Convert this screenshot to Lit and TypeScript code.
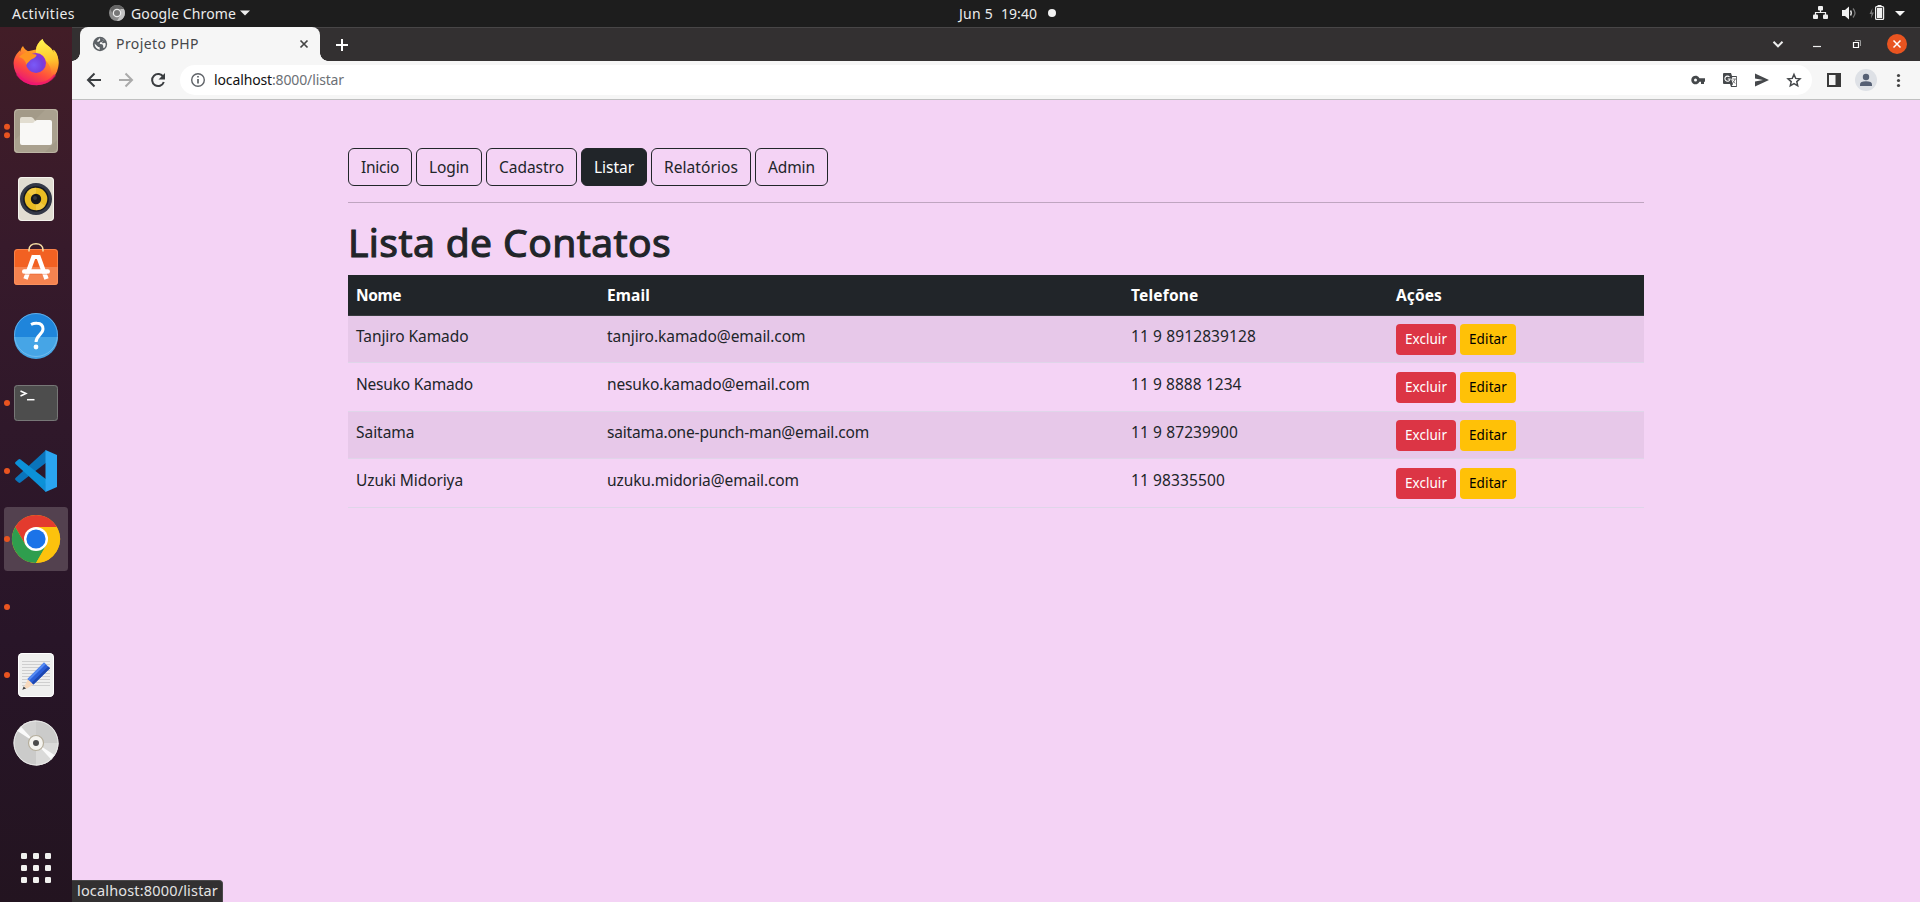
import { LitElement, html, css, svg } from "lit";
import { customElement, property } from "lit/decorators.js";

/** Inline text that is tracked so that its advance equals `w` pixels. */
@customElement("fit-text")
class FitText extends LitElement {
  @property() text = "";
  @property({ type: Number }) w = 0;
  static styles = css`
    :host { display: inline-block; white-space: pre; }
    .t { display: inline-block; }
  `;
  updated() {
    const t = this.renderRoot.querySelector(".t") as HTMLElement;
    t.style.letterSpacing = "0px";
    const natural = t.getBoundingClientRect().width;
    t.style.letterSpacing = (this.w - natural) / this.text.length + "px";
  }
  render() {
    return html`<span class="t">${this.text}</span>`;
  }
}

const fit = (text: string, w: number) => html`<fit-text .text=${text} .w=${w}></fit-text>`;

const dockIcons = [
  { dots: 0, art: svg`
    <defs>
      <linearGradient id="ffb" x1=".8" y1="0" x2=".3" y2="1"><stop offset="0" stop-color="#ffe53f"/><stop offset=".38" stop-color="#ff9a26"/><stop offset=".7" stop-color="#ff4a3f"/><stop offset="1" stop-color="#e5137b"/></linearGradient>
      <linearGradient id="fft" x1=".4" y1="0" x2=".5" y2="1"><stop offset="0" stop-color="#fff44f"/><stop offset=".55" stop-color="#ffc72f"/><stop offset="1" stop-color="#ff8a25" stop-opacity="0"/></linearGradient>
      <radialGradient id="ffg" cx=".4" cy=".6" r=".7"><stop offset="0" stop-color="#7a5af8"/><stop offset=".6" stop-color="#7440dc"/><stop offset="1" stop-color="#a02ad0"/></radialGradient>
    </defs>
    <path fill="url(#ffb)" d="M23 17c-2 2-2.600 4-2.500 6.300l-.4-2.100c-4.200 3.500-6.500 8.500-6.500 13.500A22.500 22 0 0 0 58.600 34c0-5-1.600-9-4.600-12.500l-1-.8.600 3C51.500 17 44 16 42.500 10c-4 3-6.200 6.500-6.500 10.500l-8 1.700c-2-1-4-2.700-5-5.200z"/>
    <path fill="url(#fft)" d="M42.500 10c1.500 6 9 7 11.500 14l-.5-3.500c3.500 3 5 8 5 13 0 6-3 12-7 15.500 1-12-5-18-11-21-3-1.600-5-3-4.500-7 .3-4 2.500-8 6.500-11z"/>
    <circle cx="36" cy="34" r="10" fill="url(#ffg)"/>
    <path fill="#ff9421" d="M19 28c3-3 6-4.800 9.500-5.800 1.500.5 3 1.600 4 2.800l3.500.6c1 .4.500 2-1.500 3.200-1.500 1-3.500 1.500-4.500 2.700-1 1.500-3 2-3.500 4.500-1-4.500-3.500-7-7.500-8z"/>
    <path fill="none" stroke="#f01370" stroke-width="2.500" opacity=".65" d="M17 45c9 13 29 13 38 1"/>` },
  { dots: 2, art: svg`
    <rect x="14" y="12" width="44" height="44" rx="4" fill="#a39a88"/><path d="M14 44l32-32h8q4 0 4 4v26L44 56H18q-4 0-4-4z" fill="#aaa18f"/>
    <rect x="14.500" y="12.500" width="43" height="43" rx="4" fill="none" stroke="#c5beae" opacity=".7"/>
    <path fill="#e2ddd0" d="M20 22q0-2 2-2h9q1.500 0 2.500 1.500L35 23.500v4H20z"/>
    <path fill="#f9f8f6" d="M20 26h12q1.500 0 2.500-1.500 1-1.500 2.500-1.500h13q2 0 2 2v21q0 2-2 2H22q-2 0-2-2z"/>` },
  { dots: 0, art: svg`
    <rect x="18" y="12" width="36" height="44" rx="4" fill="#e1ddd2"/><rect x="18.500" y="12.500" width="35" height="43" rx="3.500" fill="none" stroke="#f5f3ee"/>
    <circle cx="36" cy="34" r="16" fill="#333846"/><circle cx="36" cy="34" r="12.800" fill="#15181f"/><circle cx="36" cy="34" r="11.300" fill="#eabd23"/><path fill="#f5cf4f" d="M36 34l-9-7a11.300 11.300 0 0 1 9-4.300zM36 34l9 7a11.300 11.300 0 0 1-9 4.300z" opacity=".7"/>
    <circle cx="36" cy="34" r="5.200" fill="#16181d"/><circle cx="35" cy="33" r="2" fill="#35373d"/>` },
  { dots: 0, art: svg`
    <rect x="14" y="16" width="44" height="36" rx="3.500" fill="#f26122"/><path fill="#f58350" d="M14 34h44v14.500q0 3.500-3.500 3.500h-37Q14 52 14 48.500z"/>
    <rect x="14.500" y="16.500" width="43" height="35" rx="3" fill="none" stroke="#fa9a68" opacity=".6"/>
    <path d="M29 18.500V17c0-4 3-6.300 7-6.300s7 2.300 7 6.300v1.500" fill="none" stroke="#f5dca3" stroke-width="1.600"/>
    <path d="M34 22.500L25.500 46M38 22.500L46.500 46" stroke="#fff" stroke-width="4.500"/><path d="M33 22h6v4h-6z" fill="#fff"/>
    <rect x="22" y="36.300" width="28" height="4.400" rx="2.200" fill="#fff"/><path d="M24 41.300h24" stroke="#e65b24" opacity=".4"/>` },
  { dots: 0, art: svg`
    <circle cx="36" cy="34" r="22" fill="#1f85db"/><path fill="#46a5e6" d="M14 36h44a22 22 0 0 1-44 0z"/><circle cx="36" cy="34" r="21.500" fill="none" stroke="#8ac8f2" opacity=".6"/>
    <path d="M31 23.500c2-1 4-1.400 6-1.200 4 .2 6 2.700 6 5.700 0 5-6.800 6.500-7 13" fill="none" stroke="#fff" stroke-width="3"/><circle cx="36" cy="46" r="2.400" fill="#fff"/>` },
  { dots: 1, art: svg`
    <rect x="14" y="16" width="44" height="36" rx="3.500" fill="#4d4d4d"/><rect x="14.500" y="16.500" width="43" height="35" rx="3" fill="none" stroke="#777"/>
    <path d="M20.500 22l5.500 2.500-5.500 2.500" fill="none" stroke="#fff" stroke-width="1.500"/><path d="M27 30.700h7.500" stroke="#fff" stroke-width="1.500"/>` },
  { dots: 1, art: svg`
    <path fill="#0a74bb" d="M46 13L15.500 41q-1 1 0 2l3 2.600q1 .7 2 0L47 25z"/>
    <path fill="#0c91d8" d="M46 55L15.500 27q-1-1 0-2l3-2.600q1-.7 2 0L47 43z"/>
    <path fill="#2aa5f0" d="M45.500 55V13L57 18v32z"/><path fill="#1688d0" d="M45.500 55v-8.500L41 50z" opacity=".5"/>` },
  { dots: 1, active: true, art: svg`
    <circle cx="36" cy="34" r="24" fill="#fcc20d"/>
    <path fill="#e33b2e" d="M15.200 22A24 24 0 0 1 56.800 22H36L25.600 40z"/>
    <path fill="#2f9e4e" d="M15.200 22A24 24 0 0 0 36 58L46.400 40H36L25.600 40z"/><path fill="#fcc20d" d="M36 58L46.400 40 46 28V22h10.800A24 24 0 0 1 36 58z"/>
    <circle cx="36" cy="34" r="12" fill="#fff"/><circle cx="36" cy="34" r="9.600" fill="#1b73e8"/>` },
  { dots: 1, art: svg`` },
  { dots: 1, art: svg`
    <rect x="18" y="12" width="36" height="44" rx="4.500" fill="#efefee"/><rect x="18.500" y="12.500" width="35" height="43" rx="4" fill="none" stroke="#fff"/>
    <path d="M22 20.500h28M22 23.500h28M22 26.500h28M22 29.500h28M22 32.500h28M22 35.500h28M22 38.500h28M22 41.500h28M22 44.500h28" stroke="#cfcfcf"/>
    <path fill="#f7d9bd" d="M28 38l5.500 5.500-7 4.200-2.200-2.200z"/><path fill="#444" d="M22.300 48.800l1.300-3.300 2.500 2z"/>
    <path fill="#2b5fd9" d="M44 21.500l6 5.800L33.500 43.500 27.500 38z"/><path fill="#558af2" d="M44 21.500l1.800 1.700L29.300 39.600 27.500 38z"/><path fill="#1d47b0" d="M48.200 25.600l1.800 1.700L33.500 43.500l-1.800-1.700z"/>` },
  { dots: 0, art: svg`
    <circle cx="36" cy="34" r="22.500" fill="#cbcbca"/><path fill="#dadad9" d="M36 34h22.500A22.500 22.500 0 0 1 36 56.500z"/><path fill="#d3d3d2" d="M36 34V11.500A22.500 22.500 0 0 0 17 22z"/>
    <path fill="#fafafa" d="M36 34L17.500 22l3.300-4.500zM36 34l18.500 12-3.300 4.500z"/><circle cx="36" cy="34" r="22" fill="none" stroke="#e9e9e8"/>
    <circle cx="36" cy="34" r="7.500" fill="#f5f4f0" stroke="#b5ae9c" stroke-width="1.200"/><circle cx="36" cy="34" r="3" fill="#4c4c4c"/>` },
];

const nav: [string, number, boolean][] = [
  ["Inicio", 38, false], ["Login", 40, false], ["Cadastro", 65, false],
  ["Listar", 40, true], ["Relatórios", 74, false], ["Admin", 47, false],
];

const rows: [string, number, string, number, string, number][] = [
  ["Tanjiro Kamado", 112.500, "tanjiro.kamado@email.com", 198.500, "11 9 8912839128", 125],
  ["Nesuko Kamado", 117, "nesuko.kamado@email.com", 202.500, "11 9 8888 1234", 110.500],
  ["Saitama", 58.500, "saitama.one-punch-man@email.com", 262, "11 9 87239900", 107],
  ["Uzuki Midoriya", 107, "uzuku.midoria@email.com", 192, "11 98335500", 94],
];

@customElement("app-root")
class AppRoot extends LitElement {
  static styles = css`
    :host { display: flex; flex-direction: column; width: 1920px; height: 902px; overflow: hidden; font-family: "Noto Sans", "Open Sans", sans-serif; font-size: 15.500px; color: #212529; }
    * { box-sizing: border-box; }
    svg { display: block; flex: none; }
    .top { height: 27px; flex: none; background: #1d1d1d; color: #ececec; display: flex; align-items: center; font-size: 14px; line-height: 27px; }
    .top > svg { margin-bottom: 1px; }
    .top .act { margin-left: 12px; width: 97px; }
    .top .cicon { margin-right: 6px; }
    .top .app { width: 109px; }
    .top .date { margin-left: 709px; width: 42px; }
    .top .time { width: 47px; }
    .top .sys { margin-left: auto; }
    .body { flex: 1; display: flex; min-height: 0; }
    .dock { width: 72px; flex: none; background: linear-gradient(#421d27, #371a2b 25%, #2f182a 46%, #281528 70%, #231420); display: flex; flex-direction: column; padding-top: 2px; }
    .apps { margin-top: 72px; }
    .win { flex: 1; display: flex; flex-direction: column; min-width: 0; }
    .tabs { height: 34px; flex: none; background: #333031; border-top: 1px solid #484647; display: flex; align-items: center; }
    .tab { margin: -1px 0 0 0; width: 256px; height: 34px; flex: none; display: grid; grid-template-columns: 19px 19px 1fr 28px; align-items: center; color: #45474a; font-size: 14px; line-height: 34px; background:
      radial-gradient(circle at 0 0, transparent 7.500px, #f6f6f6 8px) 0 100% / 8px 8px no-repeat,
      radial-gradient(circle at 100% 0, transparent 7.500px, #f6f6f6 8px) 100% 100% / 8px 8px no-repeat; position: relative; isolation: isolate; }
    .tab::before { content: ""; position: absolute; inset: 0 8px; background: #f6f6f6; border-radius: 8px 8px 0 0; z-index: -1; }
    .tab .title { grid-column: 3; padding-left: 6px; }
    .tab .globe { grid-column: 2; margin-left: 1px; }
    .tab .close { margin-left: -1px; }
    .plus { margin-left: 8px; }
    .winctl { margin-left: auto; }
    .bar { height: 39px; flex: none; background: #f6f6f6; border-bottom: 1px solid #bfc0c0; display: flex; align-items: center; }
    .omni { width: 1632px; height: 30px; border-radius: 15px; background: #fff; display: flex; align-items: center; font-size: 14px; line-height: 30px; }
    .omni .host { color: #111; margin-left: 9px; width: 58px; height: 30px; }
    .omni .path { color: #6c7075; flex: 1; height: 30px; }
    .page { flex: 1; background: #f4d3f5; position: relative; display: flex; flex-direction: column; padding: 48px 276px 0; }
    .nav { display: flex; gap: 4px; height: 38px; flex: none; }
    .nb { border: 1px solid #212529; border-radius: 6px; padding: 0 12px; line-height: 37px; }
    .nb.on { background: #212529; color: #fff; }
    .hr { height: 1px; flex: none; background: #bfa5c0; margin: 16px 0; }
    .h1 { font-size: 39px; line-height: 46px; height: 56px; flex: none; -webkit-text-stroke: 1.100px #212529; }
    .row { display: grid; flex: none; grid-template-columns: 251px 524px 265px 256px; padding: 9px 0 0 8px; border-bottom: 1px solid #dfd5e9; height: 49px; line-height: 24px; }
    .row.odd { background: #e7c8e9; height: 47px; padding-top: 8px; }
    .row.head { background: #212529; color: #fff; font-weight: 700; height: 41px; border-color: #373b3e; padding-top: 8px; }
    .btns { display: flex; gap: 4px; }
    .b { height: 31px; border-radius: 4px; padding: 0 9px; font-size: 13.500px; line-height: 30px; }
    .red { background: #dc3545; color: #fff; }
    .yel { background: #ffc107; color: #000; }
    .status { position: absolute; left: 0; bottom: 0; width: 151px; height: 22px; background: #323031; border-top: 1px solid #4a484a; border-right: 1px solid #4a484a; border-top-right-radius: 4px; color: #e3e3e3; font-size: 14.500px; line-height: 18px; padding-left: 5px; }
  `;

  render() {
    return html`
      <div class="top">
        <span class="act">${fit("Activities", 63)}</span>
        <svg class="cicon" width="16" height="16" viewBox="0 0 16 16"><circle cx="8" cy="8" r="8" fill="#8b8b8b"/><path fill="#666" d="M1.100 4A8 8 0 0 1 14.900 4H8L4.500 10z"/><path fill="#c2c2c2" d="M8 16l3.500-6V4h3.400A8 8 0 0 1 8 16z"/><circle cx="8" cy="8" r="4.300" fill="#ededed"/><circle cx="8" cy="8" r="3" fill="#777"/></svg>
        <span class="app">${fit("Google Chrome", 105)}</span>
        <svg width="10" height="6" viewBox="0 0 10 6"><path d="M0 .5h10L5 5.500z" fill="#eee"/></svg>
        <span class="date">${fit("Jun 5", 34)}</span><span class="time">${fit("19:40", 36)}</span>
        <svg width="8" height="8" viewBox="0 0 8 8"><circle cx="4" cy="4" r="4" fill="#f2f2f2"/></svg>
        <svg class="sys" width="110" height="26" viewBox="1810 0 110 26">
          <g fill="#f0f0f0"><rect x="1818" y="6" width="5" height="4.500" rx="1"/><rect x="1813" y="14.500" width="5" height="4.500" rx="1"/><rect x="1823" y="14.500" width="5" height="4.500" rx="1"/></g>
          <path d="M1820.500 10v2.500M1815.500 15v-2.500h10v2.500" fill="none" stroke="#f0f0f0" stroke-width="1.200"/>
          <path fill="#f2f2f2" d="M1842 10h3l4-3.500v13l-4-3.500h-3z"/><path d="M1850.500 10.500q1.700 2.500 0 5" fill="none" stroke="#ddd" stroke-width="1.400"/><path d="M1853 8.500q4 4.500 0 9" fill="none" stroke="#777" stroke-width="1.300"/>
          <path fill="#777" d="M1872.500 8l-3 6h2l-.6 4.500 3-6h-2z"/><rect x="1875.600" y="6.600" width="8" height="12.800" rx="1" fill="none" stroke="#f0f0f0" stroke-width="1.200"/><path fill="#f0f0f0" d="M1877 8h5.200v10h-5.200zM1877.500 5h4v1.500h-4z"/>
          <path fill="#f5f5f5" d="M1895 11h10l-5 5z"/>
        </svg>
      </div>
      <div class="body">
        <div class="dock">
          ${dockIcons.map((d) => html`<svg width="72" height="68" viewBox="0 0 72 68">
            ${d.active ? svg`<rect x="4" y="2" width="64" height="64" rx="3.500" fill="#53414f"/>` : ""}
            ${d.art}
            ${d.dots === 1 ? svg`<circle cx="7" cy="34" r="3" fill="#e95420"/>` : ""}
            ${d.dots === 2 ? svg`<circle cx="7" cy="29.800" r="3" fill="#e95420"/><circle cx="7" cy="38.300" r="3" fill="#e95420"/>` : ""}
          </svg>`)}
          <svg class="apps" width="72" height="38" viewBox="0 849 72 38">
            ${[853, 865, 877].map((y) => [21, 33, 45].map((x) => svg`<rect x=${x} y=${y} width="6" height="6" rx="1.300" fill="#f1f1ef"/>`))}
          </svg>
        </div>
        <div class="win">
          <div class="tabs">
            <div class="tab">
              <svg class="globe" width="16" height="16" viewBox="0 0 16 16"><circle cx="8" cy="8" r="7.200" fill="#5c6166"/><path fill="#f6f6f6" d="M2.500 7.500l3.200 3q.8.800 1.800.4l.3 2.900Q3 12.800 2.500 7.500zM8 2.400q2.500 0 4 1.600L10.500 6 8.200 6.200 7.700 8l2.600.2 1 1.800-.3 1.600 1.200.4q1.800-2 1.500-4.500l-1.500-.7-1.400.6-1-1.500L12.500 4Q10.500 2 7 2.500l-.7 1.600-1.600 1 1.400.9 2.100-1.400z"/></svg>
              <span class="title">${fit("Projeto PHP", 83)}</span>
              <svg class="close" width="10" height="10" viewBox="0 0 10 10"><path d="M1.500 1.500l7 7M8.500 1.500l-7 7" stroke="#444" stroke-width="1.700"/></svg>
            </div>
            <svg class="plus" width="12" height="12" viewBox="0 0 12 12"><path d="M6 0v12M0 6h12" stroke="#fff" stroke-width="2"/></svg>
            <svg class="winctl" width="150" height="33" viewBox="1770 28 150 33">
              <path d="M1773.500 41.800l4.500 4.500 4.500-4.500" fill="none" stroke="#eee" stroke-width="2"/>
              <path d="M1813 46.500h8" stroke="#eee" stroke-width="1.200"/>
              <path d="M1853.500 42.500h5v5h-5z" fill="none" stroke="#fff" stroke-width="1.200"/><path d="M1855 40.500h5.500v5.500" fill="none" stroke="#999"/>
              <circle cx="1897" cy="44" r="10" fill="#e95420"/><path d="M1893.500 40.500l7 7M1900.500 40.500l-7 7" stroke="#fff" stroke-width="1.500"/>
            </svg>
          </div>
          <div class="bar">
            <svg width="108" height="38" viewBox="72 61 108 38">
              <path d="M101 80H88.500M94.500 73.500L88 80l6.500 6.500" fill="none" stroke="#3a3d40" stroke-width="2"/>
              <path d="M119 80h12.500M125.500 73.500L132 80l-6.500 6.500" fill="none" stroke="#aaa" stroke-width="2"/>
              <path d="M163.300 77A6 6 0 1 0 163.800 82" fill="none" stroke="#3a3d40" stroke-width="2"/><path fill="#3a3d40" d="M165 73v6.500h-6.500z"/>
            </svg>
            <div class="omni">
              <svg width="25" height="30" viewBox="180 65 25 30"><circle cx="198" cy="80" r="6.300" fill="none" stroke="#5f6368" stroke-width="1.400"/><path d="M198 79v4.500M198 76v1.600" stroke="#5f6368" stroke-width="1.700"/></svg>
              <span class="host">${fit("localhost", 58)}</span><span class="path">${fit(":8000/listar", 72)}</span>
              <svg width="125" height="30" viewBox="1687 65 125 30">
                <g fill="#45484b">
                  <path d="M1699.500 78.300a4.300 4.300 0 1 0 0 3.400h1.500v2.300h3v-2.300h1v-3.400zM1695.500 81.500a1.500 1.500 0 1 1 0-3 1.500 1.500 0 0 1 0 3z" fill-rule="evenodd"/>
                  <path d="M1724 73h7l1 3h4.200q.8 0 .8.800v9.400q0 .8-.8.800h-5.200l-1-3h-6q-1 0-1-1v-9q0-1 1-1zM1732.400 77.200l2.800 8.600h.6v-8.600z" fill-rule="evenodd"/>
                  <path d="M1755 73.500l14 6.500-14 6.500v-5l8-1.500-8-1.500z"/>
                </g>
                <path d="M1732.500 77h3.700v9h-4.500l1.300-2-1.700-4.500z" fill="#fff"/><path d="M1732.500 79h3.500M1735 79q-.5 3-2.500 4M1732.700 80.500l2.500 3" stroke="#666" stroke-width=".8" fill="none"/>
                <path d="M1729.500 77a2.600 2.600 0 1 0 .6 2h-2.400" fill="none" stroke="#fff" stroke-width="1.100"/>
                <path d="M1794 74.500l1.700 3.900 4.300.4-3.200 2.800.9 4.200-3.700-2.200-3.700 2.200.9-4.200-3.200-2.800 4.300-.4z" fill="none" stroke="#45484b" stroke-width="1.500"/>
              </svg>
            </div>
            <svg width="108" height="38" viewBox="1812 61 108 38">
              <path fill="#3a3a3a" fill-rule="evenodd" d="M1827 73h14v14h-14zM1829 75v10h6.500v-10z"/>
              <circle cx="1866" cy="80" r="11" fill="#dee1e6"/><circle cx="1866" cy="77" r="3.200" fill="#566074"/><path fill="#566074" d="M1860 86v-1.500q0-3.200 6-3.200t6 3.200V86z"/>
              <circle cx="1898.500" cy="75.500" r="1.600" fill="#444"/><circle cx="1898.500" cy="80.500" r="1.600" fill="#444"/><circle cx="1898.500" cy="85.500" r="1.600" fill="#444"/>
            </svg>
          </div>
          <div class="page">
            <div class="nav">${nav.map(([t, w, on]) => html`<div class="nb ${on ? "on" : ""}">${fit(t, w)}</div>`)}</div>
            <div class="hr"></div>
            <div class="h1">${fit("Lista de Contatos", 323)}</div>
            <div class="row head">
              <div>${fit("Nome", 45)}</div><div>${fit("Email", 43)}</div><div>${fit("Telefone", 67.500)}</div><div>${fit("Ações", 46)}</div>
            </div>
            ${rows.map((r, i) => html`<div class="row ${i % 2 ? "" : "odd"}">
              <div>${fit(r[0], r[1])}</div><div>${fit(r[2], r[3])}</div><div>${fit(r[4], r[5])}</div>
              <div class="btns"><div class="b red">${fit("Excluir", 42)}</div><div class="b yel">${fit("Editar", 38)}</div></div>
            </div>`)}
            <div class="status">${fit("localhost:8000/listar", 141)}</div>
          </div>
        </div>
      </div>
    `;
  }
}
